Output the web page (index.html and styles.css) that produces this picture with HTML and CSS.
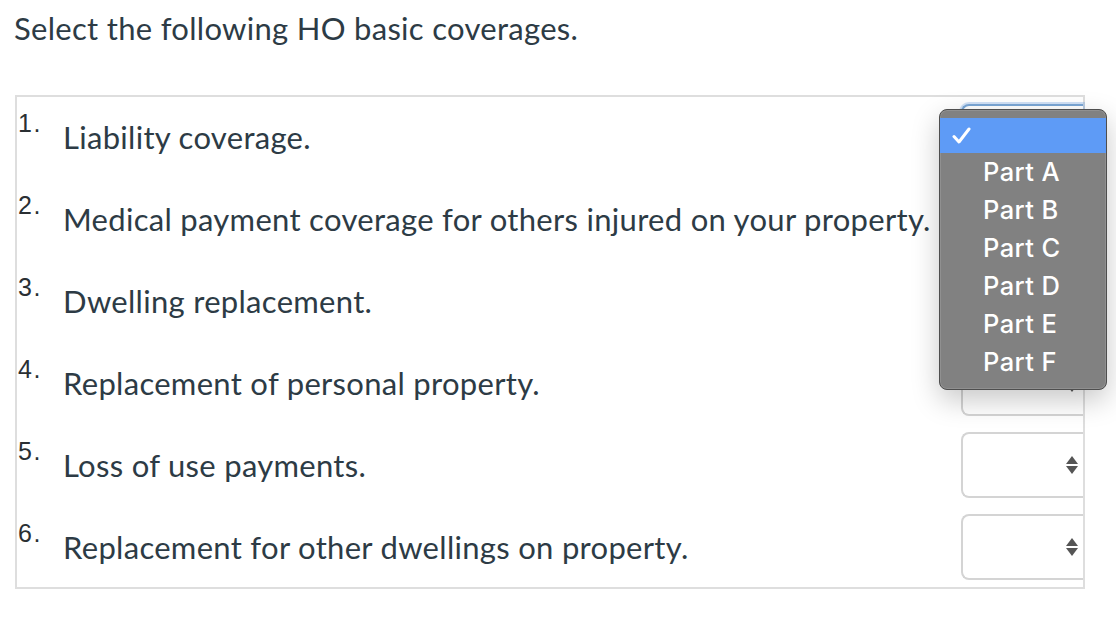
FILE: index.html
```html
<!DOCTYPE html>
<html>
<head>
<meta charset="utf-8">
<link rel="stylesheet" href="styles.css">
</head>
<body>
<div class="page">
  <h1 class="title">Select the following HO basic coverages.</h1>
  <div class="box">
    <div class="row">
      <div class="label"><span class="num">1.</span><span class="txt">Liability coverage.</span></div>
      <div class="select focused"><span class="arrows"><span class="up"></span><span class="down"></span></span></div>
    </div>
    <div class="row">
      <div class="label"><span class="num">2.</span><span class="txt">Medical payment coverage for others injured on your property.</span></div>
      <div class="select"><span class="arrows"><span class="up"></span><span class="down"></span></span></div>
    </div>
    <div class="row">
      <div class="label"><span class="num">3.</span><span class="txt">Dwelling replacement.</span></div>
      <div class="select"><span class="arrows"><span class="up"></span><span class="down"></span></span></div>
    </div>
    <div class="row">
      <div class="label"><span class="num">4.</span><span class="txt">Replacement of personal property.</span></div>
      <div class="select"><span class="arrows"><span class="up"></span><span class="down"></span></span></div>
    </div>
    <div class="row">
      <div class="label"><span class="num">5.</span><span class="txt">Loss of use payments.</span></div>
      <div class="select"><span class="arrows"><span class="up"></span><span class="down"></span></span></div>
    </div>
    <div class="row">
      <div class="label"><span class="num">6.</span><span class="txt">Replacement for other dwellings on property.</span></div>
      <div class="select"><span class="arrows"><span class="up"></span><span class="down"></span></span></div>
    </div>
  </div>
  <div class="menu">
    <div class="opt selected"><svg class="check" width="19" height="18" viewBox="0 0 19 18"><polyline points="2,9.5 7,15 17,2" fill="none" stroke="#fff" stroke-width="3" stroke-linecap="round" stroke-linejoin="round"/></svg></div>
    <div class="opt">Part A</div>
    <div class="opt">Part B</div>
    <div class="opt">Part C</div>
    <div class="opt">Part D</div>
    <div class="opt">Part E</div>
    <div class="opt">Part F</div>
  </div>
</div>
</body>
</html>
```

FILE: styles.css
```css
html, body {
  margin: 0;
  padding: 0;
  background: #fff;
}
.page {
  position: relative;
  padding: 8px 0 0 15px;
  width: 1070px;
  color: #2d3b45;
  font-family: Lato, "Open Sans", sans-serif;
}
.title {
  margin: 0 0 0 -1px;
  font-size: 31px;
  font-weight: 400;
  line-height: 40px;
  letter-spacing: 0.3px;
}
.box {
  margin-top: 47px;
  border: 2px solid #dedede;
  padding: 7px 0;
  display: flex;
  flex-direction: column;
  gap: 16px;
}
.row {
  display: flex;
  align-items: center;
  height: 66px;
}
.label {
  flex: 1;
  display: flex;
  align-items: flex-start;
}
.num {
  width: 45px;
  padding-left: 1px;
  font-family: "Liberation Sans", Arial, sans-serif;
  font-size: 25px;
  line-height: 28px;
  letter-spacing: 1.5px;
  margin-top: -9px;
  color: #2a2f33;
}
.txt {
  font-size: 31px;
  line-height: 38px;
  margin-top: 0;
  letter-spacing: 0.3px;
}
.select {
  width: 116px;
  height: 62px;
  border: 2px solid #d4d4d4;
  border-right: none;
  border-radius: 8px 0 0 8px;
  background: #fff;
  display: flex;
  align-items: center;
  justify-content: flex-end;
  padding-right: 4px;
  box-sizing: content-box;
}
.select.focused {
  border-color: #7aa7d6;
  box-shadow: 0 0 0 2px rgba(120, 170, 230, 0.35);
}
.arrows {
  display: flex;
  flex-direction: column;
  gap: 2px;
  margin-right: 1px;
}
.up {
  width: 0;
  height: 0;
  border-left: 6px solid transparent;
  border-right: 6px solid transparent;
  border-bottom: 8px solid #555;
}
.down {
  width: 0;
  height: 0;
  border-left: 6px solid transparent;
  border-right: 6px solid transparent;
  border-top: 8px solid #555;
}
.menu {
  position: absolute;
  left: 939px;
  top: 109px;
  width: 166px;
  padding: 8px 0 8px;
  background: #818181;
  border: 1px solid #4e4e4e;
  border-radius: 8px;
  box-shadow: 0 10px 28px rgba(0, 0, 0, 0.22), inset 0 0 0 1px rgba(255,255,255,0.12);
  font-family: Inter, Roboto, sans-serif;
  color: #fff;
}
.opt {
  height: 38px;
  line-height: 38px;
  padding-left: 43px;
  font-size: 25.5px;
  font-weight: 500;
  letter-spacing: 0.4px;
}
.opt.selected {
  height: 35px;
  background: #5e9bf6;
  padding-left: 12px;
  display: flex;
  align-items: center;
}
.check {
  display: block;
}
```
